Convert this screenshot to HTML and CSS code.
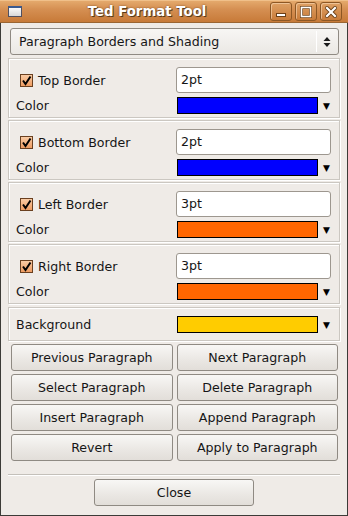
FILE: index.html
```html
<!DOCTYPE html>
<html lang="en">
<head>
    <meta charset="UTF-8">
    <title>Ted Format Tool</title>
    <link rel="stylesheet" href="styles.css">
</head>
<body>
<div class="window">
    <div class="titlebar">
        <span class="app_icon"></span>
        <div class="title">Ted Format Tool</div>
        <div class="wm_buttons">
            <span class="wm_btn">
                <svg width="12" height="12" viewBox="0 0 12 12"><rect x="1.5" y="7.5" width="9" height="3" fill="#fff" stroke="#6b4018" stroke-width="1"/></svg>
            </span>
            <span class="wm_btn">
                <svg width="12" height="12" viewBox="0 0 12 12"><rect x="1.5" y="1.5" width="9" height="9" fill="none" stroke="#6b4018" stroke-width="3"/><rect x="1.5" y="1.5" width="9" height="9" fill="none" stroke="#fff" stroke-width="1.6"/></svg>
            </span>
            <span class="wm_btn">
                <svg width="12" height="12" viewBox="0 0 12 12"><path d="M2 2 L10 10 M10 2 L2 10" stroke="#6b4018" stroke-width="4" stroke-linecap="square"/><path d="M2 2 L10 10 M10 2 L2 10" stroke="#fff" stroke-width="2.2" stroke-linecap="square"/></svg>
            </span>
        </div>
    </div>
    <div class="content">
        <div class="combo">
            <span class="combo_text">Paragraph Borders and Shading</span>
            <span class="combo_sep"></span>
            <svg class="combo_arrows" width="8" height="12" viewBox="0 0 8 12"><path d="M4 1 L7.5 5 L0.5 5 Z M0.5 7 L7.5 7 L4 11 Z" fill="#1a1a1a"/></svg>
        </div>

        <div class="frame">
            <label class="check_row"><span class="check"><svg width="13" height="13" viewBox="0 0 13 13"><path d="M3 6.5 L5.5 10 L10.5 2.5" fill="none" stroke="#000" stroke-width="2"/></svg></span>Top Border</label>
            <div class="entry">2pt</div>
            <span class="row_label">Color</span>
            <span class="swatch blue"></span>
            <span class="drop">&#9660;</span>
        </div>

        <div class="frame">
            <label class="check_row"><span class="check"><svg width="13" height="13" viewBox="0 0 13 13"><path d="M3 6.5 L5.5 10 L10.5 2.5" fill="none" stroke="#000" stroke-width="2"/></svg></span>Bottom Border</label>
            <div class="entry">2pt</div>
            <span class="row_label">Color</span>
            <span class="swatch blue"></span>
            <span class="drop">&#9660;</span>
        </div>

        <div class="frame">
            <label class="check_row"><span class="check"><svg width="13" height="13" viewBox="0 0 13 13"><path d="M3 6.5 L5.5 10 L10.5 2.5" fill="none" stroke="#000" stroke-width="2"/></svg></span>Left Border</label>
            <div class="entry">3pt</div>
            <span class="row_label">Color</span>
            <span class="swatch orange"></span>
            <span class="drop">&#9660;</span>
        </div>

        <div class="frame">
            <label class="check_row"><span class="check"><svg width="13" height="13" viewBox="0 0 13 13"><path d="M3 6.5 L5.5 10 L10.5 2.5" fill="none" stroke="#000" stroke-width="2"/></svg></span>Right Border</label>
            <div class="entry">3pt</div>
            <span class="row_label">Color</span>
            <span class="swatch orange"></span>
            <span class="drop">&#9660;</span>
        </div>

        <div class="frame frame_bg">
            <span class="row_label">Background</span>
            <span class="swatch yellow"></span>
            <span class="drop">&#9660;</span>
        </div>

        <div class="buttons">
            <button class="btn">Previous Paragraph</button>
            <button class="btn">Next Paragraph</button>
            <button class="btn">Select Paragraph</button>
            <button class="btn">Delete Paragraph</button>
            <button class="btn">Insert Paragraph</button>
            <button class="btn">Append Paragraph</button>
            <button class="btn">Revert</button>
            <button class="btn">Apply to Paragraph</button>
        </div>

        <div class="separator"></div>

        <div class="close_row">
            <button class="btn close_btn">Close</button>
        </div>
    </div>
</div>
</body>
</html>
```

FILE: styles.css
```css
* {
    box-sizing: border-box;
}

body {
    margin: 0;
    font-family: "DejaVu Sans", "Liberation Sans", sans-serif;
    font-size: 12.6px;
    color: #161616;
}

.window {
    width: 348px;
    height: 516px;
    background: #efebe7;
    border: 1px solid #3c3b37;
    border-top: none;
    display: flex;
    flex-direction: column;
}

/* title bar */
.titlebar {
    height: 23px;
    margin: 0 -1px;
    display: flex;
    align-items: center;
    padding: 0 6px 0 8px;
    background: linear-gradient(#e4a96c, #d58f52 40%, #c77a38);
    border-top: 1px solid #f0c08a;
    border-bottom: 1px solid #9a6532;
}

.app_icon {
    width: 14px;
    height: 11px;
    background: linear-gradient(#fafafa, #d8d8d8);
    border: 1px solid #505060;
    border-top: 2px solid #3a5a90;
}

.title {
    flex: 1;
    text-align: center;
    font-size: 13.3px;
    font-weight: bold;
    color: #fff;
    text-shadow: 1px 1px 0 #5a3a1a, 0 0 2px #7a4a20;
    padding-left: 2px;
}

.wm_buttons {
    display: flex;
    gap: 3px;
}

.wm_btn {
    width: 22px;
    height: 19px;
    display: flex;
    align-items: center;
    justify-content: center;
    border: 1px solid #8d5724;
    border-radius: 3px;
    background: linear-gradient(#dea064, #c97c3a);
    box-shadow: inset 1px 1px 0 rgba(255, 230, 200, 0.5);
}

/* content */
.content {
    flex: 1;
    padding: 5px 7px 0 7px;
    display: flex;
    flex-direction: column;
}

.combo {
    height: 27px;
    margin: 0 1px 0 2px;
    display: flex;
    align-items: center;
    padding: 0 7px 0 8px;
    border: 1px solid #8f8a83;
    border-radius: 3px;
    background: linear-gradient(#f7f6f4, #ebe8e4);
}

.combo_text {
    flex: 1;
}

.combo_sep {
    width: 1px;
    height: 21px;
    background: #c8c4be;
    border-right: 1px solid #fff;
    margin-right: 6px;
}

.frame {
    height: 60px;
    margin-top: 3px;
    display: grid;
    grid-template-columns: 160px 142px 1fr;
    grid-template-rows: 26px 17px;
    row-gap: 4px;
    align-items: center;
    padding: 8px 7px 3px 7px;
    border: 1px solid #cbc7c1;
    box-shadow: inset 1px 1px 0 #fff, 1px 1px 0 #fff;
}

.frame + .frame {
    margin-top: 2px;
}

.frame + .frame_bg {
    margin-top: 3px;
    height: 34px;
    grid-template-rows: 17px;
    padding-top: 8px;
}

.check_row {
    display: flex;
    align-items: center;
    padding-left: 4px;
}

.check {
    width: 13px;
    height: 13px;
    margin-right: 5px;
    border: 1px solid #6a4020;
    background: linear-gradient(#f9cba4, #ee9c62);
    display: flex;
}

.check svg {
    margin: -1px;
}

.entry {
    grid-column: 2 / span 2;
    width: 155px;
    height: 26px;
    line-height: 24px;
    padding-left: 4px;
    background: #fff;
    border: 1px solid #9d978f;
    border-radius: 3px;
}

.swatch {
    height: 17px;
    margin-left: 1px;
    border: 1px solid #000;
}

.blue {
    background: #0000ff;
}

.orange {
    background: #ff6600;
}

.yellow {
    background: #ffcc00;
}

.drop {
    font-size: 9px;
    padding-left: 5px;
    color: #000;
}

/* buttons */
.buttons {
    margin: 3px 2px 0 3px;
    display: grid;
    grid-template-columns: 1fr 1fr;
    gap: 3px 4px;
}

.btn {
    height: 27px;
    font-family: "DejaVu Sans", "Liberation Sans", sans-serif;
    font-size: 12.6px;
    color: #161616;
    border: 1px solid #8f8a83;
    border-radius: 3px;
    background: linear-gradient(#f8f7f5, #eae7e3 60%, #e2ded9);
    padding: 0;
}

.separator {
    margin-top: 13px;
    height: 2px;
    border-top: 1px solid #c4c0ba;
    border-bottom: 1px solid #fff;
}

.close_row {
    display: flex;
    justify-content: center;
    margin-top: 3px;
}

.close_btn {
    width: 160px;
}
```
